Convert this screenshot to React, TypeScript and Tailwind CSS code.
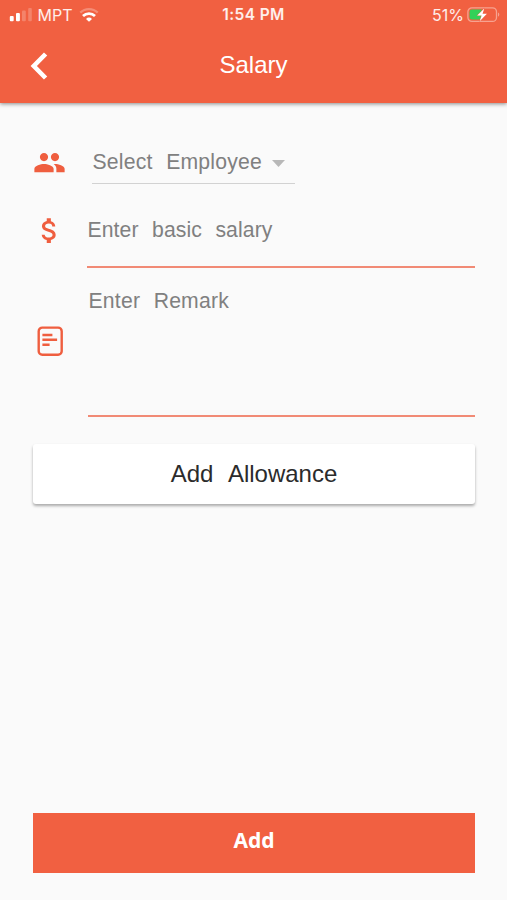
import type { ReactNode } from "react";
import { MdAttachMoney, MdPeople } from "react-icons/md";

function SignalIcon() {
  return (
    <svg className="ml-[9px] h-4 w-6 shrink-0" viewBox="0 0 24 16" fill="#fff">
      <rect x="0.8" y="9" width="3.9" height="5.2" rx="1" />
      <rect x="7" y="6" width="3.9" height="8.2" rx="1" />
      <rect x="13" y="3.4" width="3.8" height="10.8" rx="1" opacity="0.22" />
      <rect x="19.2" y="1" width="3.6" height="13.2" rx="1" opacity="0.22" />
    </svg>
  );
}

function WifiIcon() {
  return (
    <svg className="ml-[6px] h-4 w-5 shrink-0" viewBox="0 0 20 16" fill="none" stroke="#fff">
      <path d="M1.3 5.6a12.6 12.6 0 0 1 17.4 0" strokeWidth="2.4" opacity="0.28" />
      <path d="M4 9a8.8 8.8 0 0 1 12 0" strokeWidth="2.8" />
      <path d="M10 14.8 7 11.9a4.3 4.3 0 0 1 6 0z" fill="#fff" stroke="none" />
    </svg>
  );
}

function BatteryIcon() {
  return (
    <svg className="ml-[3px] h-4 w-[33px] shrink-0" viewBox="0 0 33 16" fill="none">
      <rect x="0.9" y="0.8" width="28.6" height="13.6" rx="4" stroke="#fff" strokeOpacity="0.42" strokeWidth="1.3" />
      <path d="M31 5.5c1.8.7 1.8 3.5 0 4.2z" fill="#fff" fillOpacity="0.42" />
      <path d="M5 2.6h9.5v10H5a2.4 2.4 0 0 1-2.4-2.4V5A2.4 2.4 0 0 1 5 2.6z" fill="#32d158" />
      <path
        d="M17.3 1.5 10.2 8.4h4.4l-1.9 5.8 7.2-7.4h-4.4z"
        fill="#fff"
        stroke="#f16041"
        strokeWidth="0.8"
        paintOrder="stroke"
      />
    </svg>
  );
}

function NoteIcon() {
  return (
    <svg className="h-[30px] w-[26px]" viewBox="0 0 26 30" fill="none" stroke="#ef5e3f">
      <rect x="1.7" y="1.6" width="23" height="27.2" rx="3.6" strokeWidth="2.4" />
      <path d="M5.4 9h10M5.4 13.8h14.7M5.4 18.8h7.2" strokeWidth="2.6" />
    </svg>
  );
}

function StatusBar() {
  return (
    <div className="grid h-[30px] grid-cols-[1fr_auto_1fr] items-center text-[16px] leading-none text-white/90">
      <div className="flex items-center">
        <SignalIcon />
        <span className="ml-[4.5px]">MPT</span>
        <WifiIcon />
      </div>
      <span className="text-[15.5px] font-semibold tracking-[0.4px]">1:54 PM</span>
      <div className="flex items-center justify-end pr-[7px]">
        <span>51%</span>
        <BatteryIcon />
      </div>
    </div>
  );
}

interface FieldRowProps {
  icon: ReactNode;
  className: string;
  children: ReactNode;
}

function FieldRow({ icon, className, children }: FieldRowProps) {
  return (
    <div className={`flex text-[#ef5e3f] ${className}`}>
      <div className="w-[33px] shrink-0">{icon}</div>
      {children}
    </div>
  );
}

export default function App() {
  return (
    <div className="flex h-[900px] w-[507px] flex-col overflow-hidden bg-[#fafafa] font-['Liberation_Sans',Arial,sans-serif] text-[21.2px] leading-[24px]">
      <header className="h-[103px] shrink-0 bg-[#f16041] shadow-[0_1px_4px_rgba(0,0,0,0.45)]">
        <div className="font-[Inter,sans-serif]">
          <StatusBar />
        </div>
        <div className="grid h-[70px] grid-cols-[1fr_auto_1fr] items-center text-white">
          <button aria-label="Back" className="ml-[29px] mt-px w-5">
            <svg className="h-7 w-5" viewBox="0 0 20 28" fill="none" stroke="#fff" strokeWidth="4.6">
              <path d="M16.6 2 4.8 14 16.6 26" />
            </svg>
          </button>
          <h1 className="text-[24px] leading-none">Salary</h1>
        </div>
      </header>

      <main className="flex flex-1 flex-col pb-[27px] pl-[33px] pr-8 pt-[42px]">
        <FieldRow className="h-10" icon={<MdPeople className="mt-px size-[33px]" />}>
          <button className="ml-[26px] mt-[5px] flex h-[33px] w-[203px] text-left text-[#808080] shadow-[0_1px_0_#d2d2d2]">
            <span className="whitespace-nowrap pl-[0.5px] tracking-[0.2px] [word-spacing:7.5px]">
              Select Employee
            </span>
            <svg className="ml-[10px] mt-[10px] h-[7px] w-[13px]" viewBox="0 0 13 7">
              <path d="M0 0h13L6.5 7z" fill="#b8b8b8" />
            </svg>
          </button>
        </FieldRow>

        <FieldRow className="mt-[29px]" icon={<MdAttachMoney className="size-[33px]" />}>
          <div className="ml-[21px] mt-[4px] flex h-[50px] flex-1 flex-col justify-between text-[#808080]">
            <span className="pl-[0.5px] tracking-[0.1px] [word-spacing:7.4px]">Enter basic salary</span>
            <div className="h-[2px] bg-[#f18a75]" />
          </div>
        </FieldRow>

        <FieldRow className="mt-[21px]" icon={<div className="mt-[37px] pl-1"><NoteIcon /></div>}>
          <div className="ml-[22px] flex h-[128px] flex-1 flex-col justify-between text-[#808080]">
            <span className="pl-[0.5px] tracking-[0.2px] [word-spacing:7.4px]">Enter Remark</span>
            <div className="h-[2px] bg-[#f18a75]" />
          </div>
        </FieldRow>

        <button className="mt-[27px] h-[60px] rounded-[3px] bg-white pb-px text-[24px] text-[#2b2b2b] shadow-[0_2px_3px_rgba(0,0,0,0.32)] [word-spacing:9.2px]">
          Add Allowance
        </button>

        <button className="mt-auto h-[60px] bg-[#f16041] pb-[6px] font-['Noto_Sans',sans-serif] text-[21px] font-bold text-white">
          Add
        </button>
      </main>
    </div>
  );
}
